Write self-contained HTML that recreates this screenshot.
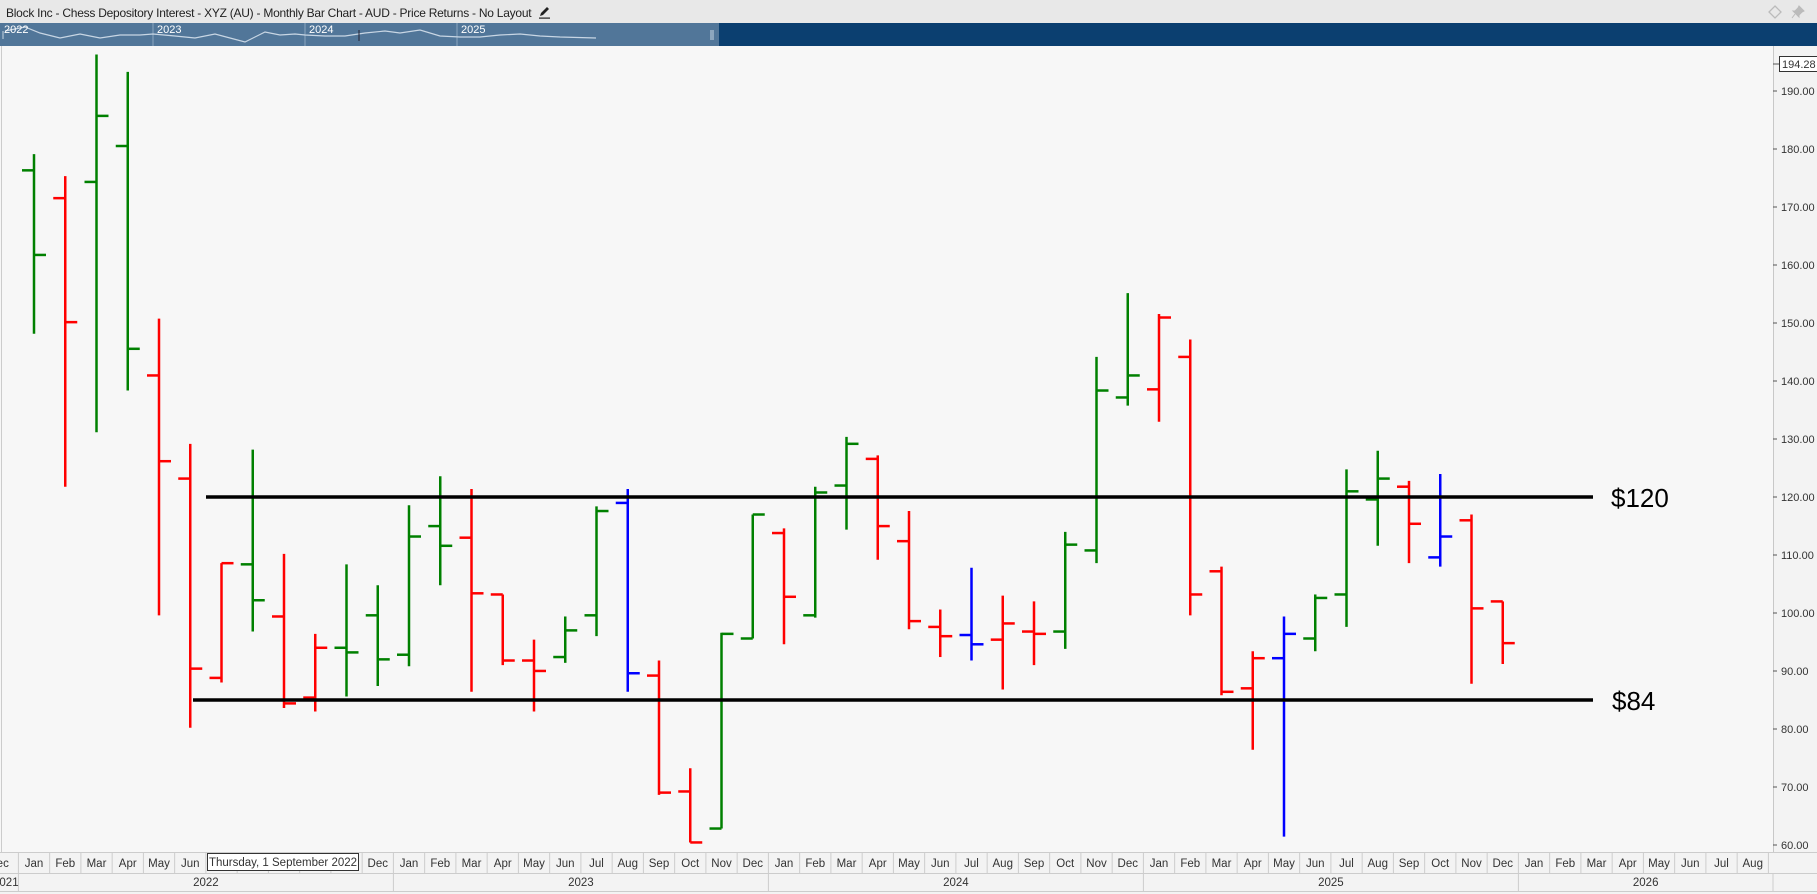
<!DOCTYPE html>
<html><head><meta charset="utf-8">
<style>
*{margin:0;padding:0;box-sizing:border-box}
body{width:1817px;height:894px;overflow:hidden;background:#f7f7f7;font-family:"Liberation Sans",sans-serif;position:relative}
#title{position:absolute;left:0;top:0;width:1817px;height:23px;background:#e8e8e8;font-size:12px;color:#222;padding:5px 0 0 6px;letter-spacing:-0.25px}
#nav{position:absolute;left:0;top:23px;width:1817px;height:23px;background:#0b3f70}
</style></head><body>
<div id="title">Block Inc - Chess Depository Interest - XYZ (AU) - Monthly Bar Chart - AUD - Price Returns - No Layout
<svg width="14" height="14" viewBox="0 0 14 14" style="vertical-align:-2px;margin-left:4px"><path d="M2 11 L3 8 L9 2 L11 4 L5 10 Z" fill="#222"/><rect x="1" y="12.5" width="11" height="1.2" fill="#222"/></svg>
<svg style="position:absolute;left:1767px;top:4px" width="16" height="16" viewBox="0 0 16 16"><path d="M8 2 L14 8 L8 14 L2 8 Z" fill="none" stroke="#bbb" stroke-width="1.3"/></svg>
<svg style="position:absolute;left:1790px;top:4px" width="16" height="16" viewBox="0 0 16 16"><path d="M9 2 L14 7 L12 8 L9 11 L9 13 L3 7 L5 7 L8 4 Z M5 10 L2 14" fill="#bbb" stroke="#bbb" stroke-width="1"/></svg>
</div>
<div id="nav">
<svg width="1817" height="23" style="position:absolute;left:0;top:0">
<rect x="0" y="0" width="719" height="23" fill="#517699"/>
<g stroke="#8aa6c0" stroke-width="1"><line x1="153" y1="0" x2="153" y2="23"/><line x1="305" y1="0" x2="305" y2="23"/><line x1="457" y1="0" x2="457" y2="23"/></g>
<polyline fill="none" stroke="#c8d6e4" stroke-width="1.2" points="5,8 25,4 40,10 60,15 80,11 100,15 120,12 140,12 153,11 175,13 195,15 215,11 230,15 245,19 265,9 280,12 295,11 305,12 325,13 345,13 365,10 385,8 400,10 420,7 440,13 460,14 480,14 500,12 520,11 540,13 560,14 596,15"/>
<line x1="359" y1="7" x2="359" y2="18" stroke="#223" stroke-width="1"/>
<g fill="#fff" font-size="11" font-family="Liberation Sans"><text x="4" y="10">2022</text><text x="157" y="10">2023</text><text x="309" y="10">2024</text><text x="461" y="10">2025</text></g>
<g stroke="#c8d6e4"><line x1="3" y1="8" x2="3" y2="16"/><line x1="711" y1="7" x2="711" y2="17"/><line x1="713" y1="7" x2="713" y2="17"/></g>
</svg>
</div>

<svg width="1817" height="848" style="position:absolute;left:0;top:46px" font-family="Liberation Sans">
<g transform="translate(0,-46)">
<line x1="1.5" y1="46" x2="1.5" y2="852" stroke="#ccc"/>
<rect x="1773" y="46" width="44" height="806" fill="#f3f3f3"/>
<line x1="1773.5" y1="46" x2="1773.5" y2="852" stroke="#c8c8c8"/>
<g font-size="11" fill="#333" id="yax">
<text x="1781" y="95">190.00</text><text x="1781" y="153">180.00</text><text x="1781" y="211">170.00</text><text x="1781" y="269">160.00</text><text x="1781" y="327">150.00</text><text x="1781" y="385">140.00</text><text x="1781" y="443">130.00</text><text x="1781" y="501">120.00</text><text x="1781" y="559">110.00</text><text x="1781" y="617">100.00</text><text x="1781" y="675">90.00</text><text x="1781" y="733">80.00</text><text x="1781" y="791">70.00</text><text x="1781" y="849">60.00</text>
</g>
<g stroke="#555"><line x1="1773" y1="91" x2="1777" y2="91"/><line x1="1773" y1="149" x2="1777" y2="149"/><line x1="1773" y1="207" x2="1777" y2="207"/><line x1="1773" y1="265" x2="1777" y2="265"/><line x1="1773" y1="323" x2="1777" y2="323"/><line x1="1773" y1="381" x2="1777" y2="381"/><line x1="1773" y1="439" x2="1777" y2="439"/><line x1="1773" y1="497" x2="1777" y2="497"/><line x1="1773" y1="555" x2="1777" y2="555"/><line x1="1773" y1="613" x2="1777" y2="613"/><line x1="1773" y1="671" x2="1777" y2="671"/><line x1="1773" y1="729" x2="1777" y2="729"/><line x1="1773" y1="787" x2="1777" y2="787"/><line x1="1773" y1="845" x2="1777" y2="845"/><line x1="1773" y1="64" x2="1779" y2="64"/></g>
<rect x="1779.5" y="56.5" width="40" height="15" fill="#fff" stroke="#333"/>
<text x="1782" y="68" font-size="11" fill="#333">194.28</text>

<g transform="scale(1,1.1588)" stroke-width="2.5" fill="none">
<g id="bars"></g>
</g>

<line x1="206" y1="497" x2="1593" y2="497" stroke="#000" stroke-width="3.5"/>
<line x1="193" y1="700" x2="1593" y2="700" stroke="#000" stroke-width="3.5"/>
<text x="1611" y="507" font-size="26" fill="#000">$120</text>
<text x="1612" y="710" font-size="26" fill="#000">$84</text>

<rect x="0" y="852" width="1817" height="42" fill="#f3f3f3"/>
<line x1="0" y1="852.5" x2="1817" y2="852.5" stroke="#ccc"/>
<line x1="0" y1="873.5" x2="1817" y2="873.5" stroke="#ccc"/>
<line x1="0" y1="891.5" x2="1817" y2="891.5" stroke="#ccc"/>
<g id="xax" font-size="11.5" fill="#333" text-anchor="middle"></g>
</g>
</svg>
<script>
var B=[
[133,288,147,220,'g'],[152,420,171,278,'r'],[47,373,157,100,'g'],[62,337,126,301,'g'],[275,531,324,398,'r'],[383,628,413,577,'r'],
[486,589,585,486,'r'],[388,545,487,518,'g'],[478,611,532,607,'r'],[547,614,602,559,'r'],[487,601,559,563,'g'],[505,592,531,569,'g'],
[436,575,565,463,'g'],[411,505,454,471,'g'],[422,597,464,512,'r'],[513,574,513,570,'r'],[552,614,570,579,'r'],[532,572,567,544,'g'],
[437,549,531,441,'g'],[422,597,434,581,'b'],[570,686,583,684,'r'],[663,727,683,727,'r'],[546,715,715,547,'g'],[444,551,551,444,'g'],
[456,556,460,515,'r'],[420,533,531,425,'g'],[377,457,419,383,'g'],[393,483,396,454,'r'],[441,543,467,536,'r'],[526,567,541,549,'r'],
[490,570,548,556,'b'],[514,595,552,538,'r'],[519,574,545,547,'r'],[459,560,545,470,'g'],[308,486,475,337,'g'],[253,350,343,324,'g'],
[271,364,336,274,'r'],[293,531,308,513,'r'],[489,600,493,597,'r'],[562,647,594,568,'r'],[532,722,568,547,'b'],[513,562,551,516,'g'],
[405,541,513,424,'g'],[389,471,431,413,'g'],[415,486,420,452,'r'],[409,489,481,463,'b'],[444,590,449,525,'r'],[519,573,519,555,'r']];
var C={g:'#008000',r:'#ff0000',b:'#0000ff'};var s='';
B.forEach(function(b,i){var x=34+31.25*i;var c=C[b[4]];
s+='<g stroke="'+c+'"><line vector-effect="non-scaling-stroke" x1="'+x+'" y1="'+b[0]+'" x2="'+x+'" y2="'+b[1]+'"/><line vector-effect="non-scaling-stroke" x1="'+(x-12)+'" y1="'+b[2]+'" x2="'+x+'" y2="'+b[2]+'"/><line vector-effect="non-scaling-stroke" x1="'+x+'" y1="'+b[3]+'" x2="'+(x+12)+'" y2="'+b[3]+'"/></g>';});
document.getElementById('bars').innerHTML=s;
var M=['Jan','Feb','Mar','Apr','May','Jun','Jul','Aug','Sep','Oct','Nov','Dec'];var t='';
for(var i=-1;i<56;i++){var l=18.4+31.25*i;var m=M[(i+12)%12];
t+='<line x1="'+(l+31.25)+'" y1="852" x2="'+(l+31.25)+'" y2="873" stroke="#ccc"/>';
t+='<text x="'+(l+15.6)+'" y="867">'+(i==-1?'ec':m)+'</text>';}
var ys=[[-13,18.4,'021'],[18.4,393.4,'2022'],[393.4,768.4,'2023'],[768.4,1143.4,'2024'],[1143.4,1518.4,'2025'],[1518.4,1773,'2026']];
ys.forEach(function(y){t+='<line x1="'+y[1]+'" y1="873" x2="'+y[1]+'" y2="891" stroke="#ccc"/><text x="'+(y[0]<0?9:(y[0]+y[1])/2)+'" y="886">'+y[2]+'</text>';});
t+='<rect x="207.5" y="853.5" width="151" height="17" fill="#fff" stroke="#333"/><text x="283" y="866" font-size="11.5">Thursday, 1 September 2022</text>';
document.getElementById('xax').innerHTML=t;
</script>
</body></html>
